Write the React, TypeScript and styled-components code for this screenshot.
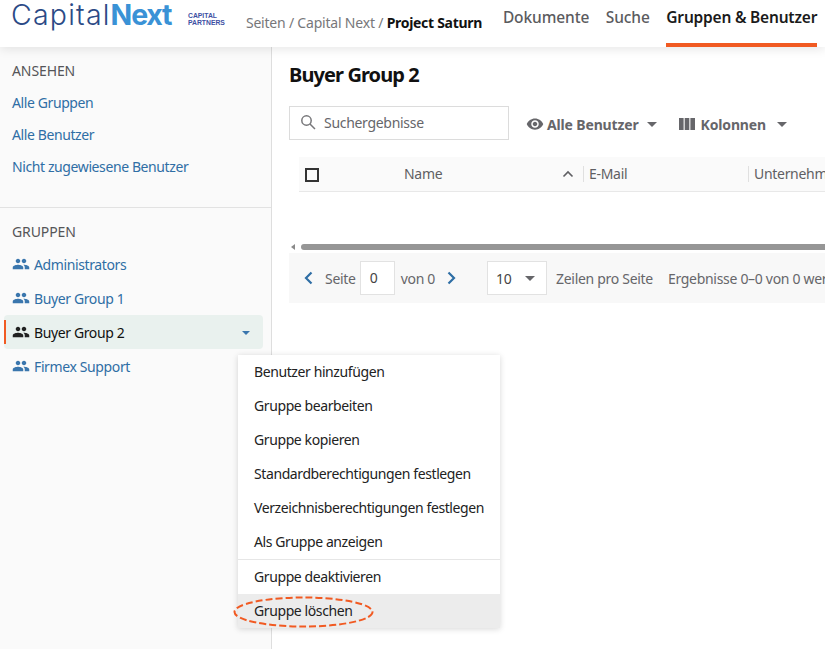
import React from "react";
import styled, { createGlobalStyle } from "styled-components";

const Global = createGlobalStyle`
  html, body { margin: 0; padding: 0; background: #fff; }
  body { font-family: "Noto Sans", "Open Sans", sans-serif; }
`;

const Page = styled.div`
  position: relative;
  width: 825px;
  height: 649px;
  overflow: hidden;
  display: flex;
  flex-direction: column;
`;

const Header = styled.header`
  position: relative;
  z-index: 2;
  flex: none;
  height: 47px;
  background: #fff;
  box-shadow: 0 2px 10px rgba(0, 0, 0, 0.1);
  display: flex;
  align-items: flex-start;
  white-space: nowrap;
`;

const Logo = styled.div`
  flex: none;
  width: 161px;
  margin: 0 0 0 11px;
  font-family: "Inter", sans-serif;
  font-size: 28.5px;
  line-height: 30px;
  letter-spacing: 1.2px;
  color: #2b4a86;
  font-weight: 300;
`;

const LogoNext = styled.span`
  color: #3a92d6;
  font-weight: 700;
  letter-spacing: -1.2px;
`;

const SubLogo = styled.div`
  flex: none;
  margin: 13px 0 0 16px;
  font-family: "Liberation Sans", sans-serif;
  font-weight: 700;
  font-size: 6.8px;
  line-height: 6.6px;
  color: #3d4fa3;
`;

const Crumbs = styled.div`
  flex: none;
  margin: 13px 0 0 21px;
  width: 237px;
  font-size: 14px;
  line-height: 19px;
  letter-spacing: -0.2px;
  color: #77777a;
`;

const CrumbStrong = styled.strong`
  color: #111;
  font-weight: 700;
  letter-spacing: -0.3px;
`;

const Nav = styled.nav`
  flex: none;
  margin-left: 20px;
  display: flex;
  gap: 16.5px;
`;

const NavItem = styled.a<{ $active?: boolean }>`
  display: block;
  height: 47px;
  box-sizing: border-box;
  padding-top: 6px;
  font-size: 15.5px;
  line-height: 22px;
  letter-spacing: ${(p) => (p.$active ? "-0.2px" : "-0.1px")};
  color: ${(p) => (p.$active ? "#1a1a1a" : "#5b5b5e")};
  font-weight: ${(p) => (p.$active ? 600 : 500)};
  border-bottom: ${(p) => (p.$active ? "4px solid #f15a22" : "none")};
`;

const Body = styled.div`
  flex: 1;
  display: flex;
  min-height: 0;
`;

const Sidebar = styled.aside`
  flex: none;
  width: 271px;
  background: #fafafa;
  border-right: 1px solid #dedede;
`;

const SideSection = styled.section`
  padding: 15px 8px 0 4px;
`;

const ViewSection = styled(SideSection)`
  height: 161px;
  box-sizing: border-box;
  border-bottom: 1px solid #e2e2e2;
`;

const SideHeading = styled.div<{ $tight?: boolean }>`
  margin-left: 8px;
  font-size: 14px;
  letter-spacing: -0.1px;
  line-height: 18px;
  color: #555558;
  margin-bottom: ${(p) => (p.$tight ? "6px" : "7px")};
`;

const SideLink = styled.a`
  display: block;
  margin-left: 8px;
  height: 32px;
  font-size: 14px;
  line-height: 32px;
  letter-spacing: -0.4px;
  color: #2f6ea5;
`;

const GroupRow = styled.div<{ $active?: boolean }>`
  position: relative;
  height: 34px;
  box-sizing: border-box;
  padding-left: 8px;
  display: flex;
  align-items: center;
  gap: 4px;
  border-radius: 4px;
  font-size: 14px;
  letter-spacing: -0.38px;
  color: ${(p) => (p.$active ? "#111" : "#2f6ea5")};
  background: ${(p) => (p.$active ? "#e9f1ee" : "transparent")};
`;

const ActiveBar = styled.span`
  position: absolute;
  left: 0;
  top: 5px;
  width: 2px;
  height: 24px;
  background: #f15a22;
`;

const GroupCaret = styled.svg`
  position: absolute;
  right: 13px;
  top: 16px;
`;

const Main = styled.main`
  flex: 1;
  min-width: 0;
  padding: 0 0 0 17px;
  background: #fff;
`;

const Title = styled.h1`
  margin: 0;
  padding-top: 14px;
  font-size: 20px;
  line-height: 27px;
  font-weight: 700;
  letter-spacing: -0.9px;
  color: #111;
`;

const Toolbar = styled.div`
  margin-top: 18px;
  display: flex;
  align-items: center;
  white-space: nowrap;
`;

const SearchBox = styled.div`
  width: 220px;
  height: 34px;
  box-sizing: border-box;
  border: 1px solid #dcdcdc;
  display: flex;
  align-items: center;
  padding: 0 0 2px 10px;
  gap: 8px;
  font-size: 14px;
  letter-spacing: -0.3px;
  color: #66666a;
`;

const ToolButton = styled.div`
  display: flex;
  align-items: center;
  height: 34px;
  box-sizing: border-box;
  padding-top: 2px;
  font-size: 14px;
  font-weight: 700;
  letter-spacing: -0.15px;
  color: #66666a;
`;

const FilterButton = styled(ToolButton)`
  margin-left: 17px;
  gap: 3px;
`;

const ColumnsButton = styled(ToolButton)`
  margin-left: 22px;
  gap: 6px;
`;

const SmallCaret = styled.svg`
  margin-left: 5px;
`;

const TableHead = styled.div`
  margin: 17px 0 0 10px;
  height: 35px;
  box-sizing: border-box;
  background: #fafafa;
  border-bottom: 1px solid #e8e8e8;
  display: flex;
  align-items: center;
  white-space: nowrap;
  font-size: 14px;
  letter-spacing: -0.3px;
  color: #5f5f63;
`;

const CheckBox = styled.span`
  flex: none;
  margin: 2px 0 0 6px;
  width: 14px;
  height: 14px;
  box-sizing: border-box;
  border: 2px solid #333;
`;

const NameCol = styled.div`
  flex: none;
  margin-left: 85px;
  width: 179px;
  display: flex;
  align-items: center;
  justify-content: space-between;
  padding: 0 9px 1px 0;
  box-sizing: border-box;
`;

const ColDivider = styled.span`
  flex: none;
  width: 1px;
  height: 16px;
  background: #e0e0e0;
`;

const MailCol = styled.div`
  flex: none;
  width: 164px;
  padding: 0 0 1px 5px;
  box-sizing: border-box;
`;

const CompanyCol = styled.div`
  flex: none;
  padding: 0 0 1px 5px;
`;

const ScrollTrack = styled.div`
  margin-top: 52px;
  height: 6px;
  display: flex;
  align-items: center;
  gap: 6px;
  padding-left: 2px;
`;

const ScrollArrow = styled.span`
  width: 0;
  height: 0;
  border-top: 3px solid transparent;
  border-bottom: 3px solid transparent;
  border-right: 4px solid #8a8a8a;
`;

const ScrollThumb = styled.div`
  flex: 1;
  height: 6px;
  border-radius: 3px 0 0 3px;
  background: #969696;
`;

const Pager = styled.div`
  margin-top: 3px;
  height: 50px;
  padding-left: 8px;
  background: #f8f8f8;
  display: flex;
  align-items: center;
  white-space: nowrap;
  font-size: 14px;
  letter-spacing: -0.3px;
  color: #66666a;
`;

const PagerChevron = styled.svg`
  flex: none;
`;

const PrevChevron = styled(PagerChevron)`
  margin-right: 4px;
`;

const NextChevron = styled(PagerChevron)`
  margin-left: 4px;
`;

const PageInput = styled.div`
  flex: none;
  width: 35px;
  height: 34px;
  box-sizing: border-box;
  margin: 0 6px 0 4px;
  background: #fff;
  border: 1px solid #e2e2e2;
  padding-left: 9px;
  line-height: 32px;
  color: #444;
`;

const PageSize = styled.div`
  flex: none;
  width: 60px;
  height: 34px;
  box-sizing: border-box;
  margin-left: 24px;
  background: #fff;
  border: 1px solid #e2e2e2;
  padding: 0 11px 0 8px;
  display: flex;
  align-items: center;
  justify-content: space-between;
  color: #444;
`;

const RowsLabel = styled.span`
  margin-left: 9px;
`;

const ResultLabel = styled.span`
  margin-left: 15px;
`;

const Menu = styled.ul`
  position: absolute;
  z-index: 3;
  left: 238px;
  top: 355px;
  width: 262px;
  margin: 0;
  padding: 0;
  list-style: none;
  background: #fff;
  box-shadow: 0 1px 6px rgba(0, 0, 0, 0.16);
`;

const MenuItem = styled.li<{ $hover?: boolean; $divided?: boolean }>`
  height: ${(p) => (p.$divided ? "35px" : "34px")};
  box-sizing: border-box;
  padding-left: 16px;
  font-size: 14px;
  line-height: 34px;
  letter-spacing: -0.4px;
  color: #222;
  background: ${(p) => (p.$hover ? "#ececec" : "#fff")};
  border-top: ${(p) => (p.$divided ? "1px solid #e6e6e6" : "none")};
`;

const Annotation = styled.svg`
  position: absolute;
  z-index: 4;
  left: 232px;
  top: 595px;
`;

const People = ({ color }: { color: string }) => (
  <svg width="18" height="18" viewBox="0 0 24 24" fill={color} style={{ flex: "none" }}>
    <path d="M16 11c1.66 0 2.99-1.34 2.99-3S17.66 5 16 5s-3 1.34-3 3 1.34 3 3 3zm-8 0c1.66 0 2.99-1.34 2.99-3S9.66 5 8 5 5 6.34 5 8s1.34 3 3 3zm0 2c-2.33 0-7 1.17-7 3.5V19h14v-2.5C15 14.17 10.33 13 8 13zm8 0c-.29 0-.62.02-.97.05 1.16.84 1.97 1.97 1.97 3.45V19h6v-2.5c0-2.33-4.67-3.5-7-3.5z" />
  </svg>
);

const Caret = ({ color }: { color: string }) => (
  <SmallCaret width="10" height="5" viewBox="0 0 10 5" fill={color}>
    <path d="M0 0h10L5 5z" />
  </SmallCaret>
);

const groups = [
  { name: "Administrators" },
  { name: "Buyer Group 1" },
  { name: "Buyer Group 2", active: true },
  { name: "Firmex Support" },
];

const menuItems = [
  "Benutzer hinzufügen",
  "Gruppe bearbeiten",
  "Gruppe kopieren",
  "Standardberechtigungen festlegen",
  "Verzeichnisberechtigungen festlegen",
  "Als Gruppe anzeigen",
];

export default function App() {
  return (
    <Page>
      <Global />
      <Header>
        <Logo>
          Capital<LogoNext>Next</LogoNext>
        </Logo>
        <SubLogo>
          CAPITAL
          <br />
          PARTNERS
        </SubLogo>
        <Crumbs>
          Seiten / Capital Next / <CrumbStrong>Project Saturn</CrumbStrong>
        </Crumbs>
        <Nav>
          <NavItem>Dokumente</NavItem>
          <NavItem>Suche</NavItem>
          <NavItem $active>Gruppen &amp; Benutzer</NavItem>
        </Nav>
      </Header>
      <Body>
        <Sidebar>
          <ViewSection>
            <SideHeading>ANSEHEN</SideHeading>
            <SideLink>Alle Gruppen</SideLink>
            <SideLink>Alle Benutzer</SideLink>
            <SideLink>Nicht zugewiesene Benutzer</SideLink>
          </ViewSection>
          <SideSection>
            <SideHeading $tight>GRUPPEN</SideHeading>
            {groups.map((g) => (
              <GroupRow key={g.name} $active={g.active}>
                {g.active && <ActiveBar />}
                <People color={g.active ? "#222" : "#3a76ad"} />
                {g.name}
                {g.active && (
                  <GroupCaret width="8" height="4" viewBox="0 0 10 5" fill="#3a76ad">
                    <path d="M0 0h10L5 5z" />
                  </GroupCaret>
                )}
              </GroupRow>
            ))}
          </SideSection>
        </Sidebar>
        <Main>
          <Title>Buyer Group 2</Title>
          <Toolbar>
            <SearchBox>
              <svg width="16" height="16" viewBox="0 0 16 16" fill="none" stroke="#77777a" strokeWidth="1.5">
                <circle cx="6.5" cy="6.5" r="4.7" />
                <path d="M10 10l5 5" />
              </svg>
              Suchergebnisse
            </SearchBox>
            <FilterButton>
              <svg width="18" height="18" viewBox="0 0 24 24" fill="#66666a">
                <path d="M12 4.5C7 4.5 2.73 7.61 1 12c1.73 4.39 6 7.5 11 7.5s9.27-3.11 11-7.5c-1.73-4.39-6-7.5-11-7.5zM12 17c-2.76 0-5-2.24-5-5s2.24-5 5-5 5 2.24 5 5-2.24 5-5 5zm0-8c-1.66 0-3 1.34-3 3s1.34 3 3 3 3-1.34 3-3-1.34-3-3-3z" />
              </svg>
              Alle Benutzer
              <Caret color="#66666a" />
            </FilterButton>
            <ColumnsButton>
              <svg width="16" height="12" viewBox="0 0 16 12" fill="#66666a">
                <path d="M0 0h4.6v12H0zM5.7 0h4.6v12H5.7zM11.4 0H16v12h-4.6z" />
              </svg>
              Kolonnen
              <Caret color="#66666a" />
            </ColumnsButton>
          </Toolbar>
          <TableHead>
            <CheckBox />
            <NameCol>
              Name
              <svg width="12" height="8" viewBox="0 0 12 8" fill="none" stroke="#5f5f63" strokeWidth="1.6">
                <path d="M1.5 6.5L6 2l4.5 4.5" />
              </svg>
            </NameCol>
            <ColDivider />
            <MailCol>E-Mail</MailCol>
            <ColDivider />
            <CompanyCol>Unternehmen</CompanyCol>
          </TableHead>
          <ScrollTrack>
            <ScrollArrow />
            <ScrollThumb />
          </ScrollTrack>
          <Pager>
            <PrevChevron width="24" height="16" viewBox="0 0 24 16" fill="none" stroke="#2f6ea5" strokeWidth="2.2">
              <path d="M14.5 2.5L9 8l5.5 5.5" />
            </PrevChevron>
            Seite
            <PageInput>0</PageInput>
            von 0
            <NextChevron width="24" height="16" viewBox="0 0 24 16" fill="none" stroke="#2f6ea5" strokeWidth="2.2">
              <path d="M9.5 2.5L15 8l-5.5 5.5" />
            </NextChevron>
            <PageSize>
              10
              <svg width="10" height="5" viewBox="0 0 10 5" fill="#66666a">
                <path d="M0 0h10L5 5z" />
              </svg>
            </PageSize>
            <RowsLabel>Zeilen pro Seite</RowsLabel>
            <ResultLabel>Ergebnisse 0–0 von 0 werden angezeigt</ResultLabel>
          </Pager>
        </Main>
      </Body>
      <Menu>
        {menuItems.map((m) => (
          <MenuItem key={m}>{m}</MenuItem>
        ))}
        <MenuItem $divided>Gruppe deaktivieren</MenuItem>
        <MenuItem $hover>Gruppe löschen</MenuItem>
      </Menu>
      <Annotation width="146" height="36" viewBox="0 0 146 36" fill="none">
        <ellipse cx="71.5" cy="17" rx="69" ry="14.5" stroke="#f15a22" strokeWidth="2" strokeDasharray="7 3" />
      </Annotation>
    </Page>
  );
}
